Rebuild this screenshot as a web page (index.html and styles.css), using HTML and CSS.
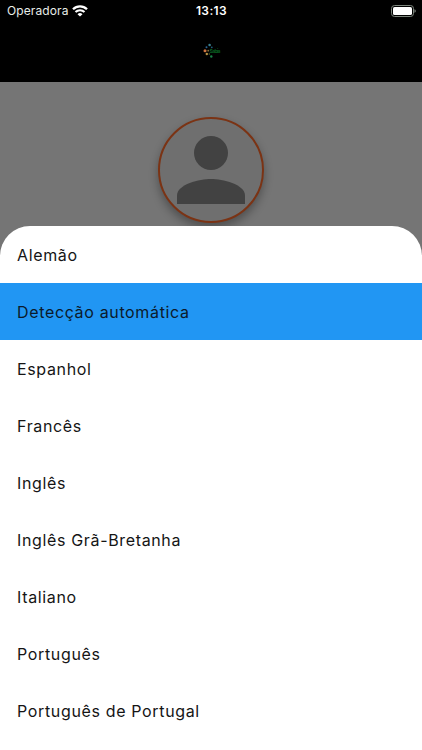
FILE: index.html
```
<!DOCTYPE html>
<html lang="pt">
<head>
  <meta charset="UTF-8" />
  <meta name="viewport" content="width=device-width, initial-scale=1.0"/>
  <title>Idioma</title>
  <link rel="stylesheet" href="styles.css">
</head>
<body>

<div class="screen">
  <!-- Status bar -->
  <div class="status-bar">
    <div class="carrier">
      <span>Operadora</span>
      <svg class="wifi" viewBox="0 0 16 12" width="16" height="12">
        <path d="M1 4.300a10 10 0 0 1 14 0" fill="none" stroke="#fff" stroke-width="2.300"/>
        <path d="M3.500 7.100a6.400 6.400 0 0 1 9 0" fill="none" stroke="#fff" stroke-width="2.100"/>
        <path d="M8 11.600L5.500 9.200a3.500 3.500 0 0 1 5 0z" fill="#fff"/>
      </svg>
    </div>
    <div class="clock">13:13</div>
    <div class="power">
      <svg viewBox="0 0 26 12" width="26" height="12">
        <rect x="1.500" y="0.500" width="22" height="11" rx="3" fill="none" stroke="#7c857c"/>
        <rect x="3" y="2" width="19" height="8" rx="1.600" fill="#fff"/>
        <path d="M24.500 4.200c1.600.5 1.600 3.100 0 3.600z" fill="#8d948d"/>
      </svg>
    </div>
  </div>

  <!-- App header -->
  <div class="header">
    <svg viewBox="0 0 32 28" width="32" height="28">
      <circle cx="13.6" cy="9" r="1.3" fill="#387f91"/>
      <circle cx="10.5" cy="11.3" r="1" fill="#286494"/>
      <circle cx="15.8" cy="11.3" r="0.9" fill="#23607f"/>
      <circle cx="9" cy="14.7" r="1.5" fill="#cf7440"/>
      <circle cx="12.200" cy="14.700" r="0.9" fill="#8b7138"/>
      <circle cx="10.8" cy="18" r="1.2" fill="#b59142"/>
      <circle cx="15.300" cy="20.500" r="1.200" fill="#1a8247"/>
      <circle cx="13.300" cy="18" r="0.8" fill="#57602b"/>
      <text class="logo-text" x="13.5" y="17" textLength="11">Sabia</text>
    </svg>
  </div>

  <!-- Profile, dimmed behind the sheet -->
  <div class="profile">
    <div class="avatar">
      <svg viewBox="0 0 68 68" width="68" height="68">
        <circle cx="34" cy="17" r="17"/>
        <path d="M0 68V59.5C0 48.2 22.7 43 34 43s34 5.2 34 16.500V68z"/>
      </svg>
    </div>
  </div>

  <!-- Language sheet -->
  <div class="sheet">
    <div class="option">Alemão</div>
    <div class="option selected">Detecção automática</div>
    <div class="option">Espanhol</div>
    <div class="option">Francês</div>
    <div class="option">Inglês</div>
    <div class="option">Inglês Grã-Bretanha</div>
    <div class="option">Italiano</div>
    <div class="option">Português</div>
    <div class="option">Português de Portugal</div>
  </div>
</div>

</body>
</html>
```
FILE: styles.css
```
body { font-family: Inter, "Liberation Sans", sans-serif; background: #757575; margin: 0; }
.screen { position: relative; height: 750px; overflow: hidden; }
.status-bar {
  display: grid; grid-template-columns: 1fr auto 1fr; align-items: center;
  height: 21px; padding: 0 6px 0 7px; background: #000; color: #fff; font-size: 12px;
}
.carrier { display: flex; align-items: center; gap: 4px; color: #e8ede8; letter-spacing: 0.1px; }
.clock { font-weight: 600; letter-spacing: 0.4px; }
.power { display: flex; justify-content: flex-end; }
.header {
  display: flex; justify-content: center; align-items: flex-start;
  box-sizing: border-box; height: 61px; padding: 15px 0 0 2px; background: #000;
}
.logo-text { font-size: 5px; font-weight: 700; fill: #096021; }
.profile { display: flex; justify-content: center; padding-top: 35px; }
.avatar {
  display: flex; justify-content: center; align-items: center;
  box-sizing: border-box; width: 106px; height: 106px;
  background: #6f6f6f; border: 2px solid #7b3314; border-radius: 50%;
  box-shadow: 0 5px 10px rgba(0, 0, 0, 0.32);
}
.avatar svg { fill: #424242; }
.sheet {
  position: absolute; top: 226px; left: 0; right: 0; bottom: 0;
  background: #fff; border-radius: 30px 30px 0 0; overflow: hidden;
}
.option {
  display: flex; align-items: center; box-sizing: border-box;
  height: 57px; padding: 1px 17px 0;
  color: #151515; font-size: 16px; letter-spacing: 0.65px;
}
.option.selected { background: #2196f3; color: #0b1a2b; }
```
